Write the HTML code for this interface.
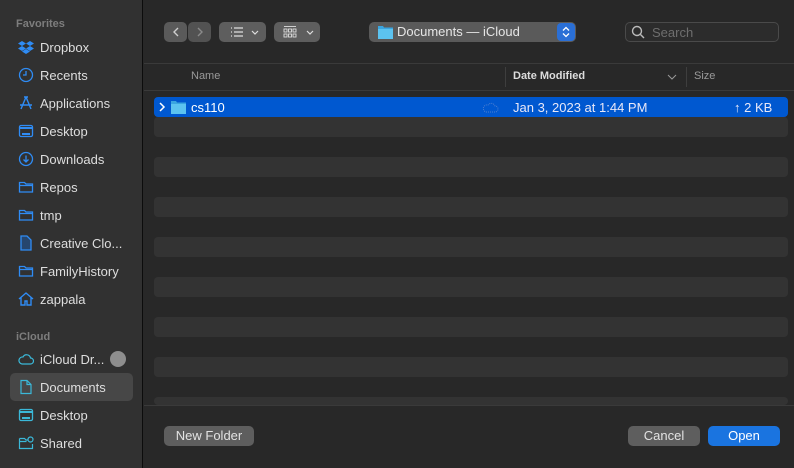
<!DOCTYPE html>
<html><head><style>
*{margin:0;padding:0;box-sizing:border-box}
body{width:794px;height:468px;background:#282828;font-family:"Liberation Sans",sans-serif;color:#dedede;font-size:13px;position:relative;overflow:hidden}
.sb{position:absolute;left:0;top:0;width:143px;height:468px;background:#313131;border-right:1px solid #0c0c0c}
.sec{position:absolute;left:16px;font-size:11px;color:#7d7d7d;font-weight:bold}
.it{position:absolute;left:10px;width:123px;height:28px;display:flex;align-items:center;padding-left:30px}
.it svg{position:absolute;left:8px;top:6px}
.sel{background:#474747;border-radius:5px}
.abs{position:absolute}
.btn{position:absolute;background:#5e5e5e;border-radius:5px;height:20px}
.stripe{position:absolute;left:154px;width:634px;height:20px;background:#333;border-radius:4px}
.line{position:absolute;background:#111}
</style></head><body>
<div class="sb">
<div class="sec" style="top:18px">Favorites</div>
<div class="it" style="top:33px"><svg width="16" height="16" viewBox="0 0 16 16" fill="#2f8cf5"><path d="M4 2l4 2.5-4 2.5L0 4.5zM12 2l4 2.5-4 2.5-4-2.5zM4 7l4 2.5-4 2.5-4-2.5zM12 7l4 2.5-4 2.5-4-2.5zM4 12.5l4-2.5 4 2.5-4 2.5z"/></svg>Dropbox</div>
<div class="it" style="top:61px"><svg width="16" height="16" viewBox="0 0 16 16" fill="none" stroke="#2f8cf5" stroke-width="1.3"><circle cx="8" cy="8" r="6.5"/><path d="M8 4v4H5"/></svg>Recents</div>
<div class="it" style="top:89px"><svg width="16" height="16" viewBox="0 0 16 16" fill="none" stroke="#2f8cf5" stroke-width="1.4"><path d="M8 2L3 14M8 2l5 12M2 10h12M6 2h4"/></svg>Applications</div>
<div class="it" style="top:117px"><svg width="16" height="16" viewBox="0 0 16 16" fill="none" stroke="#2f8cf5" stroke-width="1.3"><rect x="1.5" y="2.5" width="13" height="11" rx="1.5"/><path d="M1.5 5h13M4 11h8" stroke-width="2"/></svg>Desktop</div>
<div class="it" style="top:145px"><svg width="16" height="16" viewBox="0 0 16 16" fill="none" stroke="#2f8cf5" stroke-width="1.3"><circle cx="8" cy="8" r="6.5"/><path d="M8 4.5v6M5.5 8.5L8 11l2.5-2.5"/></svg>Downloads</div>
<div class="it" style="top:173px"><svg width="16" height="16" viewBox="0 0 16 16" fill="none" stroke="#2f8cf5" stroke-width="1.3"><path d="M1.5 3.5h5l1.5 1.5h6.5v8h-13zM1.5 6.5h13"/></svg>Repos</div>
<div class="it" style="top:201px"><svg width="16" height="16" viewBox="0 0 16 16" fill="none" stroke="#2f8cf5" stroke-width="1.3"><path d="M1.5 3.5h5l1.5 1.5h6.5v8h-13zM1.5 6.5h13"/></svg>tmp</div>
<div class="it" style="top:229px"><svg width="16" height="16" viewBox="0 0 16 16" fill="#26466e" stroke="#2f8cf5" stroke-width="1.3"><path d="M3 1h6l4 4v10H3z"/></svg>Creative Clo...</div>
<div class="it" style="top:257px"><svg width="16" height="16" viewBox="0 0 16 16" fill="none" stroke="#2f8cf5" stroke-width="1.3"><path d="M1.5 3.5h5l1.5 1.5h6.5v8h-13zM1.5 6.5h13"/></svg>FamilyHistory</div>
<div class="it" style="top:285px"><svg width="16" height="16" viewBox="0 0 16 16" fill="none" stroke="#2f8cf5" stroke-width="1.4"><path d="M1 8l7-6 7 6M3 6.5V14h4v-4h2v4h4V6.5"/></svg>zappala</div>
<div class="sec" style="top:331px">iCloud</div>
<div class="it" style="top:345px"><svg width="16" height="16" viewBox="0 0 16 16" fill="none" stroke="#3bb8d8" stroke-width="1.2"><path d="M4 13h8.5a3 3 0 000-6 4 4 0 00-7.5-1A3.5 3.5 0 004 13z"/></svg>iCloud Dr...<span class="abs" style="left:100px;top:6px;width:16px;height:16px;border-radius:50%;background:#8e8e8e"></span></div>
<div class="it sel" style="top:373px"><svg width="16" height="16" viewBox="0 0 16 16" fill="none" stroke="#3bb8d8" stroke-width="1.2"><path d="M3 1.5h6l4 4v9H3z"/><path d="M9 1.5v4h4"/></svg>Documents</div>
<div class="it" style="top:401px"><svg width="16" height="16" viewBox="0 0 16 16" fill="none" stroke="#3bb8d8" stroke-width="1.3"><rect x="1.5" y="2.5" width="13" height="11" rx="1.5"/><path d="M1.5 5h13M4 11h8" stroke-width="2"/></svg>Desktop</div>
<div class="it" style="top:429px"><svg width="16" height="16" viewBox="0 0 16 16" fill="none" stroke="#3bb8d8" stroke-width="1.2"><path d="M1.5 3.5h5l1.5 1.5h2M1.5 3.5v10h13V9M1.5 6.5h7"/><circle cx="12.5" cy="4.5" r="2.5"/></svg>Shared</div>
</div>

<div class="btn" style="left:164px;top:22px;width:23px;background:#5a5a5a"></div>
<div class="btn" style="left:188px;top:22px;width:23px;background:#525252"></div>
<svg class="abs" style="left:164px;top:22px" width="48" height="20"><path d="M14 6l-4 4 4 4" stroke="#cfcfcf" stroke-width="1.4" fill="none"/><path d="M34 6l4 4-4 4" stroke="#8a8a8a" stroke-width="1.4" fill="none"/></svg>
<div class="btn" style="left:219px;top:22px;width:47px"></div>
<svg class="abs" style="left:219px;top:22px" width="47" height="20" stroke="#ddd" stroke-width="1.2" fill="none"><path d="M12 6h1M12 10h1M12 14h1M15 6h9M15 10h9M15 14h9M33 9l3 3 3-3"/></svg>
<div class="btn" style="left:274px;top:22px;width:46px"></div>
<svg class="abs" style="left:274px;top:22px" width="46" height="20" stroke="#ddd" stroke-width="0.9" fill="none"><path d="M10 4.5h12"/><rect x="10" y="7" width="3" height="3"/><rect x="14.5" y="7" width="3" height="3"/><rect x="19" y="7" width="3" height="3"/><rect x="10" y="12" width="3" height="3"/><rect x="14.5" y="12" width="3" height="3"/><rect x="19" y="12" width="3" height="3"/><path d="M33 9l3 3 3-3" stroke-width="1.2"/></svg>
<div class="btn" style="left:369px;top:22px;width:207px;background:#5a5a5a"></div>
<svg class="abs" style="left:378px;top:25px" width="15" height="14"><path d="M0 1h5l1 1.5h9V14H0z" fill="#3aa5e0"/><rect x="0" y="4" width="15" height="10" fill="#5cc3f0"/></svg>
<div class="abs" style="left:397px;top:24px;color:#e6e6e6">Documents — iCloud</div>
<div class="abs" style="left:557px;top:23px;width:18px;height:18px;background:#2a6fd6;border-radius:4px"></div>
<svg class="abs" style="left:557px;top:23px" width="18" height="18" stroke="#fff" stroke-width="1.3" fill="none"><path d="M6 7.5l3-3 3 3M6 10.5l3 3 3-3"/></svg>
<div class="abs" style="left:625px;top:22px;width:154px;height:20px;border:1px solid #4a4a4a;border-radius:5px;background:#2c2c2c"></div>
<svg class="abs" style="left:631px;top:25px" width="14" height="14" stroke="#bbb" stroke-width="1.4" fill="none"><circle cx="6" cy="6" r="4.5"/><path d="M9.5 9.5l3.5 3.5"/></svg>
<div class="abs" style="left:652px;top:25px;color:#6e6e6e">Search</div>

<div class="line" style="left:144px;top:63px;width:650px;height:1px;background:#3a3a3a"></div>
<div class="abs" style="left:191px;top:70px;font-size:11px;color:#9a9a9a">Name</div>
<div class="abs" style="left:505px;top:67px;width:1px;height:20px;background:#3e3e3e"></div>
<div class="abs" style="left:513px;top:70px;font-size:11px;font-weight:bold;color:#dcdcdc">Date Modified</div>
<svg class="abs" style="left:667px;top:73px" width="10" height="8" stroke="#999" fill="none"><path d="M1 2l4 4 4-4"/></svg>
<div class="abs" style="left:686px;top:67px;width:1px;height:20px;background:#3e3e3e"></div>
<div class="abs" style="left:694px;top:70px;font-size:11px;color:#9a9a9a">Size</div>
<div class="line" style="left:144px;top:90px;width:650px;height:1px;background:#3a3a3a"></div>

<div class="abs" style="left:154px;top:97px;width:634px;height:20px;background:#0058d0;border-radius:4px"></div>
<svg class="abs" style="left:158px;top:101px" width="8" height="12" stroke="#fff" stroke-width="1.5" fill="none"><path d="M2 2l4 4-4 4"/></svg>
<svg class="abs" style="left:171px;top:100px" width="15" height="14"><path d="M0 1h5l1 1.5h9V14H0z" fill="#3aa5e0"/><rect x="0" y="4" width="15" height="10" fill="#5cc3f0"/></svg>
<div class="abs" style="left:191px;top:100px;color:#fff">cs110</div>
<svg class="abs" style="left:482px;top:101px" width="18" height="12" stroke="#4d7fd0" fill="none" stroke-dasharray="1 1"><path d="M4 11h9a3 3 0 000-6 4 4 0 00-7-1A3.5 3.5 0 004 11z"/></svg>
<div class="abs" style="left:513px;top:100px;color:#e8e8f8">Jan 3, 2023 at 1:44 PM</div>
<div class="abs" style="left:734px;top:100px;color:#e8e8f8">↑ 2 KB</div>
<div class="stripe" style="top:117px"></div>
<div class="stripe" style="top:157px"></div>
<div class="stripe" style="top:197px"></div>
<div class="stripe" style="top:237px"></div>
<div class="stripe" style="top:277px"></div>
<div class="stripe" style="top:317px"></div>
<div class="stripe" style="top:357px"></div>
<div class="stripe" style="top:397px;height:8px"></div>
<div class="abs" style="left:144px;top:405px;width:650px;height:63px;background:#282828;border-top:1px solid #3a3a3a"></div>

<div class="btn" style="left:164px;top:426px;width:90px;text-align:center;line-height:20px;color:#e2e2e2">New Folder</div>
<div class="btn" style="left:628px;top:426px;width:72px;text-align:center;line-height:20px;color:#e2e2e2">Cancel</div>
<div class="btn" style="left:708px;top:426px;width:72px;background:#1a74e0;text-align:center;line-height:20px;color:#fff">Open</div>
</body></html>
